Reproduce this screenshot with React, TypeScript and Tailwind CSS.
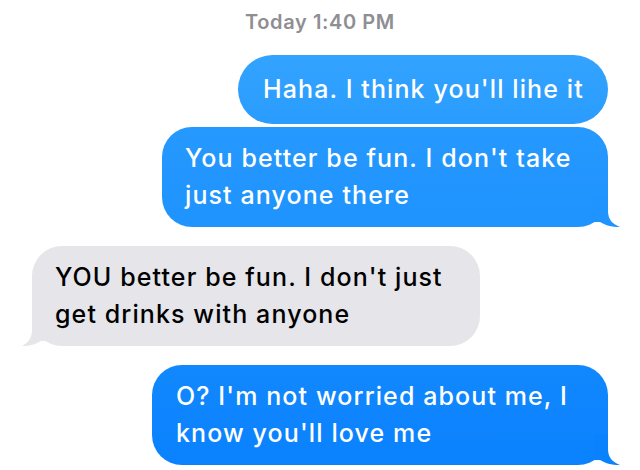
function Tail({ side }: { side: 'left' | 'right' | 'grey' }) {
  if (side === 'grey') {
    return (
      <svg className="absolute bottom-0 left-[-10px]" width="24" height="30" viewBox="0 0 24 30">
        <path d="M10 0 L10 14 C10 22 6 27 0 30 C8 30 14 28 19 25 L24 25 L24 0 Z" fill="#e5e5ea" />
      </svg>
    );
  }
  return (
    <svg className="absolute bottom-0 right-[-12px]" width="26" height="30" viewBox="0 0 26 30">
      <path
        d="M14 0 L14 14 C14 22 18 27 26 30 C17 30 11 28 6 25 L0 25 L0 0 Z"
        className={side === 'left' ? 'fill-[#1f93fe]' : 'fill-[#0a82fe]'}
      />
    </svg>
  );
}

export default function App() {
  return (
    <div className="w-[640px] h-[470px] bg-white overflow-hidden font-['Inter',sans-serif]">
      <div className="pt-[10px] text-center text-[20px] font-semibold tracking-[0.6px] text-[#8e8e93] leading-[24px]">
        Today 1:40 PM
      </div>

      <div className="flex flex-col items-end pr-[32px] mt-[21px]">
        <div className="w-[370px] h-[69px] rounded-[35px] bg-linear-to-b from-[#32a3fe] to-[#2a9cfe] text-white text-[25px] font-medium tracking-[1.1px] leading-[37px] pl-[25px] flex items-center">
          Haha. I think you'll lihe it
        </div>

        <div className="relative mt-[3px] w-[446px] rounded-[30px] bg-linear-to-b from-[#2599fe] to-[#1f93fe] text-white text-[25px] font-medium tracking-[1.1px] leading-[37px] pl-[23px] py-[13px]">
          <span className="relative z-10">
            You better be fun. I don't take
            <br />
            just anyone there
          </span>
          <Tail side="left" />
        </div>
      </div>

      <div className="flex flex-col items-start pl-[32px] mt-[19px]">
        <div className="relative w-[448px] rounded-[30px] bg-[#e5e5ea] text-black text-[25px] font-medium tracking-[1.1px] leading-[37px] pl-[23px] py-[13px]">
          <span className="relative z-10">
            YOU better be fun. I don't just
            <br />
            get drinks with anyone
          </span>
          <Tail side="grey" />
        </div>
      </div>

      <div className="flex flex-col items-end pr-[32px] mt-[19px]">
        <div className="relative w-[456px] rounded-[30px] bg-linear-to-b from-[#1288fe] to-[#0a82fe] text-white text-[25px] font-medium tracking-[1.1px] leading-[37px] pl-[24px] py-[13px]">
          <span className="relative z-10">
            O? I'm not worried about me, I
            <br />
            know you'll love me
          </span>
          <Tail side="right" />
        </div>
      </div>
    </div>
  );
}
